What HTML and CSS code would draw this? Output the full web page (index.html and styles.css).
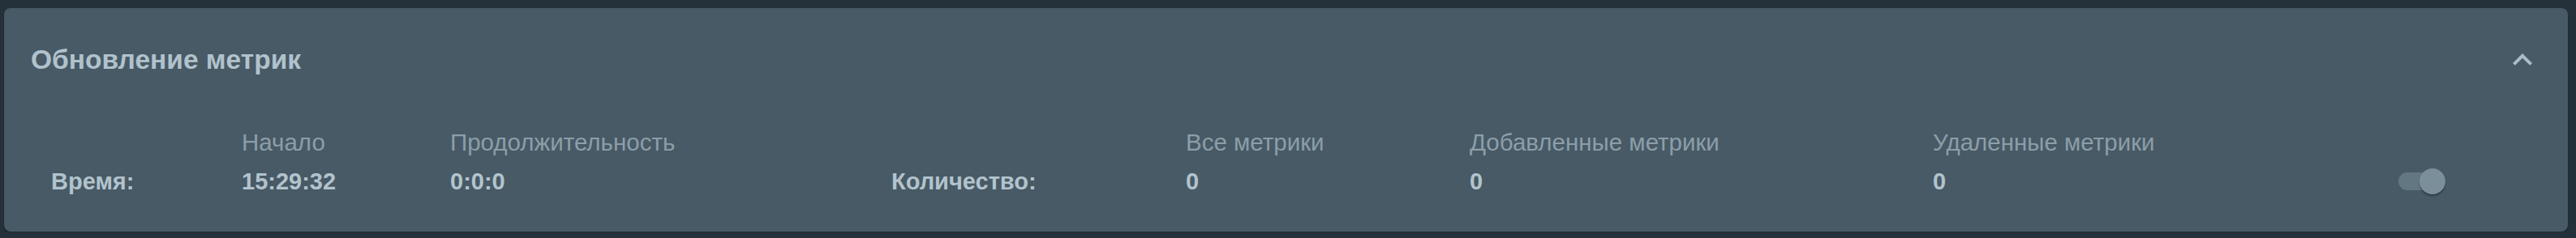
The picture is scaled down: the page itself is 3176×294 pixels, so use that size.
FILE: index.html
```html
<!DOCTYPE html>
<html lang="ru">
<head>
    <meta charset="UTF-8">
    <meta name="viewport" content="width=device-width, initial-scale=1.0">
    <title>Обновление метрик</title>
    <link rel="stylesheet" href="styles.css">
</head>
<body>
    <div class="card">
        <div class="card-header">
            <h2 class="title">Обновление метрик</h2>
            <button class="collapse-btn" aria-label="Свернуть">
                <svg viewBox="0 0 24 24" width="48" height="48">
                    <path d="M12 8l-6 6 1.41 1.41L12 10.83l4.59 4.58L18 14z"></path>
                </svg>
            </button>
        </div>

        <div class="stats">
            <div class="stat">
                <span class="stat-label"></span>
                <span class="stat-value">Время:</span>
            </div>
            <div class="stat">
                <span class="stat-label">Начало</span>
                <span class="stat-value">15:29:32</span>
            </div>
            <div class="stat">
                <span class="stat-label">Продолжительность</span>
                <span class="stat-value">0:0:0</span>
            </div>
            <div class="stat">
                <span class="stat-label"></span>
                <span class="stat-value">Количество:</span>
            </div>
            <div class="stat">
                <span class="stat-label">Все метрики</span>
                <span class="stat-value">0</span>
            </div>
            <div class="stat">
                <span class="stat-label">Добавленные метрики</span>
                <span class="stat-value">0</span>
            </div>
            <div class="stat">
                <span class="stat-label">Удаленные метрики</span>
                <span class="stat-value">0</span>
            </div>
            <div class="stat">
                <span class="stat-label"></span>
                <span class="stat-value">
                    <span class="switch">
                        <span class="switch-track"></span>
                        <span class="switch-thumb"></span>
                    </span>
                </span>
            </div>
        </div>
    </div>
</body>
</html>
```

FILE: styles.css
```css
body {
    margin: 0;
    padding: 10px 10px 0 5px;
    background: #24303a;
    font-family: 'Liberation Sans', Arial, sans-serif;
    color: #b2c3cc;
}

.card {
    background: #475a66;
    border-radius: 8px;
    box-shadow: 0 2px 2px rgba(0, 0, 0, 0.35);
    height: 276px;
    box-sizing: border-box;
}

.card-header {
    display: flex;
    align-items: center;
    justify-content: space-between;
    padding: 40px 32px 0 33px;
}

.title {
    margin: 0;
    font-size: 33.5px;
    line-height: 48px;
    font-weight: bold;
    color: #b1c2cc;
}

.collapse-btn {
    background: none;
    border: none;
    padding: 0;
    width: 48px;
    height: 48px;
    cursor: pointer;
}

.collapse-btn svg {
    display: block;
    fill: #aabcc6;
}

.stats {
    display: grid;
    grid-template-columns: 235px 257px 544px 363px 350px 571px 574px auto;
    padding: 58px 32px 0 58px;
}

.stat {
    display: flex;
    flex-direction: column;
}

.stat-label {
    font-size: 29.5px;
    line-height: 40px;
    height: 40px;
    color: #8c9ea8;
}

.stat-value {
    margin-top: 8px;
    font-size: 29px;
    line-height: 40px;
    height: 40px;
    font-weight: bold;
    color: #b3c3cc;
    display: flex;
    align-items: center;
}

.switch {
    position: relative;
    display: inline-block;
    width: 58px;
    height: 32px;
}

.switch-track {
    position: absolute;
    left: 0;
    top: 5px;
    width: 54px;
    height: 22px;
    border-radius: 11px;
    background: rgba(118, 138, 150, 0.6);
}

.switch-thumb {
    position: absolute;
    left: 26px;
    top: 0;
    width: 32px;
    height: 32px;
    border-radius: 50%;
    background: #7b8f9a;
    box-shadow: 0 2px 2px rgba(0, 0, 0, 0.35);
}
```
